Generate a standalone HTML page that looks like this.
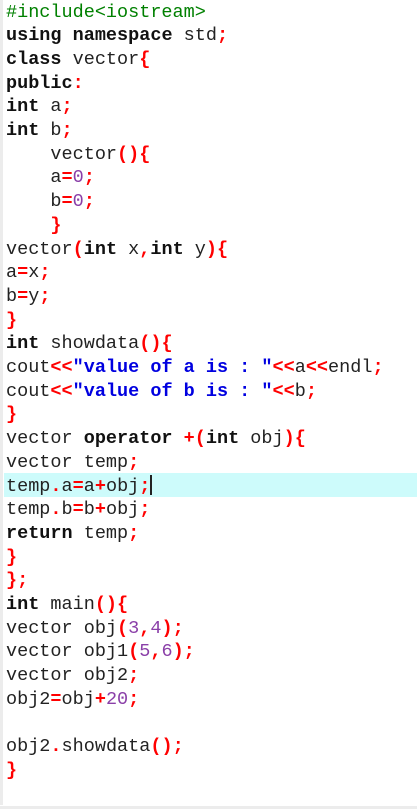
<!DOCTYPE html>
<html><head><meta charset="utf-8"><style>
html,body{margin:0;padding:0;background:#fff;width:417px;height:809px;overflow:hidden;position:relative}
.g{position:absolute;left:0;top:0;width:3px;height:805px;background:#ececec}
.bt{position:absolute;left:0;top:806px;width:417px;height:3px;background:#ececec}
pre{position:absolute;left:6px;top:0.5px;margin:0;font-family:"Liberation Mono",monospace;font-size:18.5px;line-height:23.7px;color:#222;white-space:pre}
.hl{position:absolute;left:4px;top:473px;width:413px;height:23.6px;background:#cdfbfb}
b{font-weight:bold;color:#111}
.r{color:#f00;font-weight:bold}
.s{color:#0000e0;font-weight:bold}
.n{color:#8a3fa8}
.c{color:#008000}
.cur{display:inline-block;width:2px;height:20px;background:#222;vertical-align:-4px}
</style></head><body>
<div class="g"></div><div class="bt"></div><div class="hl"></div>
<pre><span class="c">#include&lt;iostream&gt;</span>
<b>using</b> <b>namespace</b> std<span class="r">;</span>
<b>class</b> vector<span class="r">{</span>
<b>public</b><span class="r">:</span>
<b>int</b> a<span class="r">;</span>
<b>int</b> b<span class="r">;</span>
    vector<span class="r">(){</span>
    a<span class="r">=</span><span class="n">0</span><span class="r">;</span>
    b<span class="r">=</span><span class="n">0</span><span class="r">;</span>
    <span class="r">}</span>
vector<span class="r">(</span><b>int</b> x<span class="r">,</span><b>int</b> y<span class="r">){</span>
a<span class="r">=</span>x<span class="r">;</span>
b<span class="r">=</span>y<span class="r">;</span>
<span class="r">}</span>
<b>int</b> showdata<span class="r">(){</span>
cout<span class="r">&lt;&lt;</span><span class="s">"value of a is : "</span><span class="r">&lt;&lt;</span>a<span class="r">&lt;&lt;</span>endl<span class="r">;</span>
cout<span class="r">&lt;&lt;</span><span class="s">"value of b is : "</span><span class="r">&lt;&lt;</span>b<span class="r">;</span>
<span class="r">}</span>
vector <b>operator</b> <span class="r">+(</span><b>int</b> obj<span class="r">){</span>
vector temp<span class="r">;</span>
temp<span class="r">.</span>a<span class="r">=</span>a<span class="r">+</span>obj<span class="r">;</span><span class="cur"></span>
temp<span class="r">.</span>b<span class="r">=</span>b<span class="r">+</span>obj<span class="r">;</span>
<b>return</b> temp<span class="r">;</span>
<span class="r">}</span>
<span class="r">};</span>
<b>int</b> main<span class="r">(){</span>
vector obj<span class="r">(</span><span class="n">3</span><span class="r">,</span><span class="n">4</span><span class="r">);</span>
vector obj1<span class="r">(</span><span class="n">5</span><span class="r">,</span><span class="n">6</span><span class="r">);</span>
vector obj2<span class="r">;</span>
obj2<span class="r">=</span>obj<span class="r">+</span><span class="n">20</span><span class="r">;</span>

obj2<span class="r">.</span>showdata<span class="r">();</span>
<span class="r">}</span></pre>
</body></html>
